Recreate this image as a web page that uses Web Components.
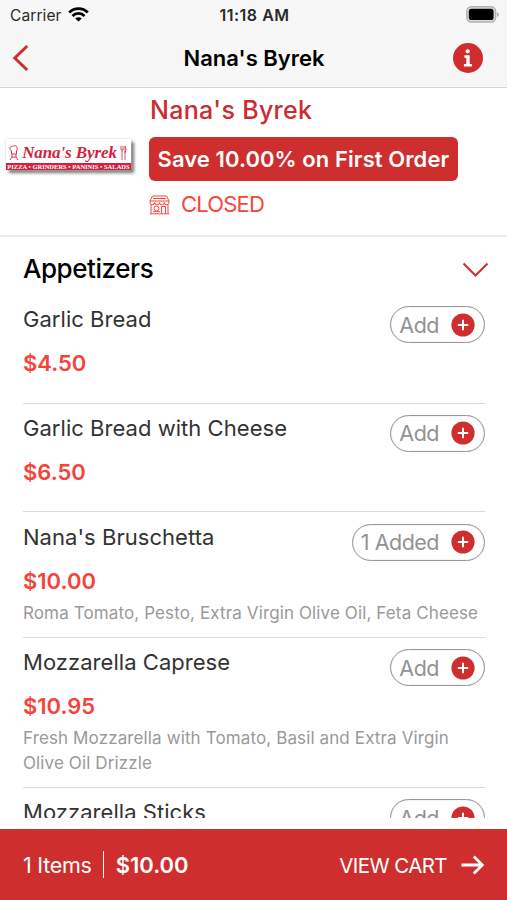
<!DOCTYPE html>
<html lang="en">
<head>
<meta charset="utf-8">
<title>Nana's Byrek</title>
<style>
    body {
        margin: 0;
        background: #fff;
        font-family: Inter, "Liberation Sans", sans-serif;
    }
</style>
</head>
<body>
<menu-screen></menu-screen>

<script>
class StatusBar extends HTMLElement {
    constructor() {
        super();
        const shadow = this.attachShadow({ mode: 'open' });
        shadow.innerHTML = `
            <style>
                :host {
                    display: grid;
                    grid-template-columns: 1fr auto 1fr;
                    align-items: center;
                    height: 30px;
                    padding: 0 8px 0 10px;
                    font-size: 15.5px;
                    color: #2a2a2a;
                }
                .carrier { display: flex; align-items: center; gap: 6px; letter-spacing: .1px; }
                .time { font-size: 16px; font-weight: 600; letter-spacing: .5px; }
                .battery { justify-self: end; display: block; margin-top: -2px; }
                .wifi { display: block; margin-top: -1px; }
            </style>
            <div class="carrier">
                <span>Carrier</span>
                <svg class="wifi" width="21" height="15" viewBox="0 0 21 15">
                    <g fill="none" stroke="#000" stroke-width="2.8">
                        <path d="M1.2 5.6C6.3.4 14.7.4 19.8 5.6"/>
                        <path d="M4.5 9C7.8 5.6 13.2 5.6 16.5 9"/>
                    </g>
                    <path d="M10.5 14.6 7.2 11.5C9 9.8 12 9.8 13.8 11.5Z"/>
                </svg>
            </div>
            <span class="time">11:18 AM</span>
            <svg class="battery" width="33" height="17" viewBox="0 0 33 17">
                <rect x=".8" y=".8" width="28.8" height="15.2" rx="4.5" fill="#ddd" stroke="#b0b0b0" stroke-width="1.4"/>
                <rect x="2.8" y="2.8" width="24.8" height="11.2" rx="2.6"/>
                <path d="M31 6v5q1.8-.7 1.8-2.5T31 6Z" fill="#aaa"/>
            </svg>
        `;
    }
}
customElements.define('status-bar', StatusBar);

class NavBar extends HTMLElement {
    constructor() {
        super();
        const shadow = this.attachShadow({ mode: 'open' });
        shadow.innerHTML = `
            <style>
                :host {
                    display: grid;
                    grid-template-columns: 1fr auto 1fr;
                    align-items: center;
                    box-sizing: border-box;
                    height: 57px;
                    padding: 0 24px 2px 12px;
                }
                h1 { margin: 0 0 0 13px; font-size: 22px; font-weight: 600; color: #000; letter-spacing: 0; line-height: 30px; }
                svg { display: block; }
                .info { justify-self: end; }
            </style>
            <svg width="18" height="28" viewBox="0 0 18 28" fill="none" stroke="#cf2e2e" stroke-width="3">
                <path d="M15.2 2 2.8 14 15.2 26"/>
            </svg>
            <h1><slot></slot></h1>
            <svg class="info" width="30" height="30" viewBox="0 0 30 30">
                <circle cx="15" cy="15" r="15" fill="#cf2e2e"/>
                <circle cx="14.7" cy="8.3" r="2.1" fill="#fff"/>
                <path d="M11.3 12.2h5.4v8.7h2.2v2.5h-8v-2.5h2.4v-6.2h-2Z" fill="#fff"/>
            </svg>
        `;
    }
}
customElements.define('nav-bar', NavBar);

class StoreLogo extends HTMLElement {
    constructor() {
        super();
        const shadow = this.attachShadow({ mode: 'open' });
        shadow.innerHTML = `
            <style>
                :host {
                    display: flex;
                    flex-direction: column;
                    width: 125px;
                    height: 31px;
                    background: #fff;
                    box-shadow: 0 0 2px #ccc, 3px 3px 3px #777;
                    color: #cf2440;
                    font-family: "Liberation Serif", serif;
                    font-weight: 700;
                    overflow: hidden;
                }
                .name { display: flex; align-items: center; justify-content: space-between; height: 24px; padding: 0 4px 0 3px; }
                .name span { font-size: 17px; font-style: italic; letter-spacing: -.1px; white-space: nowrap; line-height: 24px; margin-top: 3px; }
                .name svg { margin-top: 4px; }
                .tags { height: 7px; background: #cf2440; color: #fff; font-size: 6.5px; line-height: 7px; text-align: center; white-space: nowrap; }
            </style>
            <div class="name">
                <svg width="10" height="16" viewBox="0 0 10 16" fill="none" stroke="#cf2440" stroke-width=".9">
                    <path d="M2.5 6C-1 3 2 .5 4 1.5 6-.5 10 1.5 7.5 6v3h-5Z"/><path d="M3 9v3l-2 3M7 9v3l2 3M3 12h4"/>
                </svg>
                <span>Nana's Byrek</span>
                <svg width="7" height="16" viewBox="0 0 7 16" fill="none" stroke="#cf2440" stroke-width=".8">
                    <path d="M1 1v4h2V1M2 5v10M5 1v14M5 1q2 4 0 7"/>
                </svg>
            </div>
            <div class="tags">PIZZA • GRINDERS • PANINIS • SALADS</div>
        `;
    }
}
customElements.define('store-logo', StoreLogo);

class StoreHeader extends HTMLElement {
    constructor() {
        super();
        const shadow = this.attachShadow({ mode: 'open' });
        shadow.innerHTML = `
            <style>
                :host {
                    display: flex;
                    gap: 18px;
                    box-sizing: border-box;
                    height: 149px;
                    padding: 6px 0 0 6px;
                    border-bottom: 2px solid #ededed;
                }
                store-logo { margin-top: 45px; }
                .info { display: flex; flex-direction: column; align-items: flex-start; }
                .name { margin-left: 1px; font-size: 25px; font-weight: 500; line-height: 33px; color: #c92d31; letter-spacing: .3px; }
                .offer {
                    box-sizing: border-box;
                    height: 44px;
                    margin-top: 10px;
                    padding: 0 8.5px;
                    border-radius: 6px;
                    background: #cf2e2e;
                    color: #fff;
                    font-size: 22px;
                    font-weight: 600;
                    letter-spacing: .08px;
                    line-height: 44px;
                    white-space: nowrap;
                }
                .state { display: flex; align-items: center; gap: 11px; margin-top: 9px; font-size: 22px; letter-spacing: -.8px; line-height: 28px; color: #f4473d; }
                .state svg { margin-top: 2px; }
            </style>
            <store-logo></store-logo>
            <div class="info">
                <div class="name"><slot name="name"></slot></div>
                <div class="offer"><slot name="offer"></slot></div>
                <div class="state">
                    <svg width="21" height="20" viewBox="0 0 21 20" fill="none" stroke="#f4473d" stroke-width="1">
                        <path d="M3.5 1h14l2.5 5H1ZM1 6v1.5a2.3 2.3 0 0 0 4.7 0 2.3 2.3 0 0 0 4.8 0 2.3 2.3 0 0 0 4.8 0 2.3 2.3 0 0 0 4.7 0V6M4 3.5h13M2 10v8.5M19 10v8.5M.8 18.8h19.4M12.5 18.5v-7h4v7"/>
                        <circle cx="7.5" cy="13.5" r="2.5"/>
                        <path d="M4 16.7h7"/>
                    </svg>
                    <span class="label"><slot name="state"></slot></span>
                </div>
            </div>
        `;
    }
}
customElements.define('store-header', StoreHeader);

class AddButton extends HTMLElement {
    constructor() {
        super();
        const shadow = this.attachShadow({ mode: 'open' });
        shadow.innerHTML = `
            <style>
                :host {
                    display: inline-flex;
                    align-items: center;
                    gap: 12px;
                    box-sizing: border-box;
                    height: 37px;
                    margin-top: 1px;
                    padding: 0 9px 0 8px;
                    border: 1px solid #999;
                    border-radius: 19px;
                    box-shadow: inset 0 0 1px #999;
                    font-size: 21.5px;
                    letter-spacing: -.5px;
                    color: #929292;
                    white-space: nowrap;
                }
                svg { display: block; }
            </style>
            <span><slot></slot></span>
            <svg width="24" height="24" viewBox="0 0 24 24">
                <circle cx="12" cy="12" r="11.6" fill="#cf2e2e"/>
                <path d="M12 6.8v10.4M6.8 12h10.4" stroke="#fff" stroke-width="2"/>
            </svg>
        `;
    }
}
customElements.define('add-button', AddButton);

class MenuItem extends HTMLElement {
    constructor() {
        super();
        const shadow = this.attachShadow({ mode: 'open' });
        shadow.innerHTML = `
            <style>
                :host {
                    display: block;
                    box-sizing: border-box;
                    min-height: 108.7px;
                    padding: 10.3px 0 11.7px;
                    border-bottom: 1px solid #dcdcdc;
                }
                .top { display: flex; justify-content: space-between; align-items: flex-start; height: 38px; }
                .name { font-size: 22px; line-height: 28px; letter-spacing: .04px; color: #333; }
                .price { margin-top: 5px; font-size: 22px; font-weight: 600; line-height: 30px; color: #f4443a; }
                .desc { margin-top: 5px; font-size: 17px; letter-spacing: .12px; line-height: 24.5px; color: #999; }
                .desc:empty { display: none; }
            </style>
            <div class="top">
                <div class="name"></div>
                <add-button></add-button>
            </div>
            <div class="price"></div>
            <div class="desc"></div>
        `;
    }

    connectedCallback() {
        const root = this.shadowRoot;
        root.querySelector('.name').textContent = this.getAttribute('name');
        root.querySelector('.price').textContent = this.getAttribute('price');
        root.querySelector('.desc').innerHTML = this.getAttribute('desc');
        root.querySelector('add-button').textContent = this.getAttribute('action');
    }
}
customElements.define('menu-item', MenuItem);

class MenuSection extends HTMLElement {
    constructor() {
        super();
        const shadow = this.attachShadow({ mode: 'open' });
        shadow.innerHTML = `
            <style>
                :host { display: block; height: 581px; padding: 0 22px 0 23px; overflow: hidden; }
                header { display: flex; align-items: center; justify-content: space-between; height: 58px; margin-right: -4px; }
                h2 { margin: 5px 0 0; font-size: 26px; font-weight: 500; letter-spacing: -.45px; line-height: 34px; color: #000; }
                header svg { margin-top: 7px; }
            </style>
            <header>
                <h2><slot></slot></h2>
                <svg width="27" height="16" viewBox="0 0 27 16" fill="none" stroke="#cf2e2e" stroke-width="2">
                    <path d="M1.5 1.5 13.5 13.5 25.5 1.5"/>
                </svg>
            </header>
            <div class="items"></div>
        `;
    }

    connectedCallback() {
        const items = [
            {name:'Garlic Bread',price:'$4.50',desc:'',action:'Add'},
            {name:'Garlic Bread with Cheese',price:'$6.50',desc:'',action:'Add'},
            {name:"Nana's Bruschetta",price:'$10.00',desc:'Roma Tomato, Pesto, Extra Virgin Olive Oil, Feta Cheese',action:'1 Added'},
            {name:'Mozzarella Caprese',price:'$10.95',desc:'Fresh Mozzarella with Tomato, Basil and Extra Virgin<br>Olive Oil Drizzle',action:'Add'},
            {name:'Mozzarella Sticks',price:'',desc:'',action:'Add'}
        ];

        const list = this.shadowRoot.querySelector('.items');
        items.forEach(item => {
            const row = document.createElement('menu-item');
            Object.keys(item).forEach(key => row.setAttribute(key, item[key]));
            list.appendChild(row);
        });
    }
}
customElements.define('menu-section', MenuSection);

class CartBar extends HTMLElement {
    constructor() {
        super();
        const shadow = this.attachShadow({ mode: 'open' });
        shadow.innerHTML = `
            <style>
                :host {
                    display: flex;
                    align-items: center;
                    justify-content: space-between;
                    box-sizing: border-box;
                    height: 71px;
                    padding: 0 23px;
                    background: #cf2e2e;
                    color: #fff;
                    font-size: 21.5px;
                }
                .left, .right { display: flex; align-items: center; }
                .count { letter-spacing: -.25px; }
                .line { width: 1.5px; height: 27px; margin: 0 11.5px 0 11px; background: #fff; }
                .total { font-size: 22px; font-weight: 600; }
                .view { font-size: 20.5px; letter-spacing: -.6px; margin-top: 1px; }
                .right { gap: 14px; }
            </style>
            <div class="left">
                <span class="count"><slot name="count"></slot></span>
                <span class="line"></span>
                <span class="total"><slot name="total"></slot></span>
            </div>
            <div class="right">
                <span class="view"><slot name="action"></slot></span>
                <svg width="23" height="20" viewBox="0 0 23 20" fill="none" stroke="#fff" stroke-width="2.8">
                    <path d="M.5 10H21M12.8 1.5 21.3 10 12.8 18.5"/>
                </svg>
            </div>
        `;
    }
}
customElements.define('cart-bar', CartBar);

class MenuScreen extends HTMLElement {
    constructor() {
        super();
        const shadow = this.attachShadow({ mode: 'open' });
        shadow.innerHTML = `
            <style>
                :host { display: flex; flex-direction: column; width: 507px; height: 900px; overflow: hidden; }
                .top { background: #f7f7f7; border-bottom: 1px solid #d5d5d5; }
                cart-bar { margin-top: auto; }
            </style>
            <div class="top">
                <status-bar></status-bar>
                <nav-bar>Nana's Byrek</nav-bar>
            </div>
            <store-header>
                <span slot="name">Nana's Byrek</span>
                <span slot="offer">Save 10.00% on First Order</span>
                <span slot="state">CLOSED</span>
            </store-header>
            <menu-section>Appetizers</menu-section>
            <cart-bar>
                <span slot="count">1 Items</span>
                <span slot="total">$10.00</span>
                <span slot="action">VIEW CART</span>
            </cart-bar>
        `;
    }
}
customElements.define('menu-screen', MenuScreen);
</script>
</body>
</html>
